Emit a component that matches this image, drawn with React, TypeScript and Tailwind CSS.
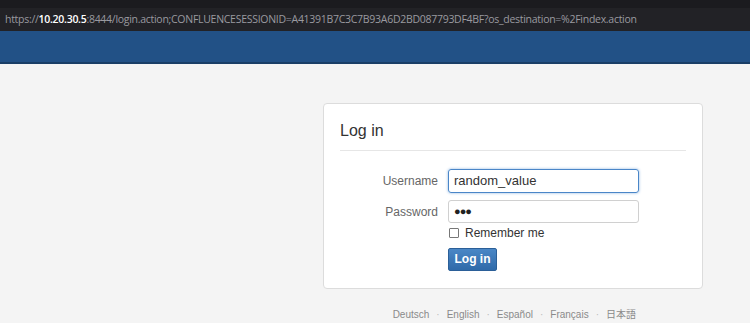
const langs = ["Deutsch", "English", "Español", "Français", "日本語"];

export default function App() {
    return (
        <div className="w-[750px] h-[323px] overflow-hidden bg-[#f4f4f4] font-['Liberation_Sans','Noto_Sans_CJK_JP',sans-serif]">
            {/* browser chrome */}
            <div className="h-[8px] bg-[#1b1b1f]" />
            <div className="h-[23px] bg-[#222226] flex items-center pl-[5px] text-[10.5px] tracking-[-0.28px] text-[#9a9aa0] font-['Open_Sans',sans-serif]">
                <span>https://</span>
                <span className="text-white font-semibold">10.20.30.5</span>
                <span>:8444/login.action;CONFLUENCESESSIONID=A41391B7C3C7B93A6D2BD087793DF4BF?os_destination=%2Findex.action</span>
            </div>
            {/* header */}
            <div className="h-[31px] bg-[#225186]" />
            <div className="h-[2px] bg-[#1a3e66]" />

            <div className="flex justify-end pr-[47px] pt-[39px]">
                <div className="w-[380px] h-[186px] bg-white border border-[#dcdcdc] rounded-[4px] px-[16px]">
                    <h1 className="text-[16px] text-[#333] pt-[17px] pb-[9px] border-b border-[#e6e6e6] leading-[20px]">Log in</h1>
                    <div className="flex flex-col gap-[7px] pt-[18px]">
                        <div className="flex items-center">
                            <label className="w-[108px] text-right pr-[10px] text-[12px] text-[#666]">Username</label>
                            <div className="w-[191px] h-[24px] border-[1.5px] border-[#4a86c8] rounded-[3px] shadow-[0_0_3px_#8fb6e0] flex items-center px-[5px] text-[13px] text-[#333]">
                                random_value
                            </div>
                        </div>
                        <div className="flex items-center">
                            <label className="w-[108px] text-right pr-[10px] text-[12px] text-[#666]">Password</label>
                            <div className="w-[191px] h-[23px] border border-[#d0d0d0] rounded-[3px] flex items-center px-[5px] text-[11px] text-[#222] tracking-[-1px]">
                                ●●●
                            </div>
                        </div>
                    </div>
                    <div className="flex items-center pl-[109px] pt-[1px] gap-[6px]">
                        <div className="w-[10px] h-[10px] border border-[#777] rounded-[1px] bg-white" />
                        <span className="text-[12px] text-[#333]">Remember me</span>
                    </div>
                    <div className="pl-[108px] pt-[4px]">
                        <button className="w-[49px] h-[23px] rounded-[2px] bg-gradient-to-b from-[#4a87c6] to-[#2f6aa9] border border-[#2b5f98] text-white text-[12px] font-bold">
                            Log in
                        </button>
                    </div>
                </div>
            </div>

            <div className="flex justify-end pr-[114px] pt-[18px] text-[10px] text-[#8a8a8a] gap-[7px]">
                {langs.map((l, i) => (
                    <span key={l} className="flex gap-[7px]">
                        {i > 0 && <span className="text-[#bbb]">·</span>}
                        {l}
                    </span>
                ))}
            </div>
        </div>
    );
}
